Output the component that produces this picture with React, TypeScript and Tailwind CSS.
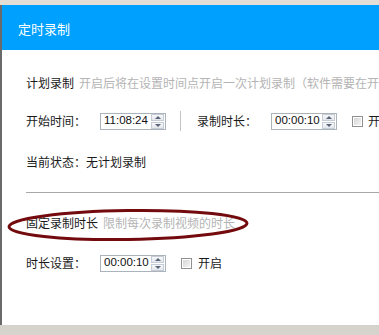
import React from "react";

const cjk = { fontFamily: '"Noto Sans CJK SC", "Liberation Sans", sans-serif' };
const num = { fontFamily: '"Liberation Sans", Arial, sans-serif' };

function Spin({ value }: { value: string }) {
  return (
    <div className="flex h-[17px] w-[66px] shrink-0 items-center border border-[#abb3bd] bg-white pl-[3px]">
      <span className="flex-1 text-[11.5px] leading-none text-[#111]" style={num}>
        {value}
      </span>
      <div className="mr-[1px] flex h-[15px] w-[13px] flex-col gap-[1px]">
        <div className="flex flex-1 items-center justify-center border border-[#c6ccd6] bg-gradient-to-b from-[#f7f8fa] to-[#e3e6ec]">
          <svg width="6" height="3" viewBox="0 0 6 3">
            <path d="M0 3L3 0L6 3Z" fill="#5a6478" />
          </svg>
        </div>
        <div className="flex flex-1 items-center justify-center border border-[#c6ccd6] bg-gradient-to-b from-[#f7f8fa] to-[#e3e6ec]">
          <svg width="6" height="3" viewBox="0 0 6 3">
            <path d="M0 0L3 3L6 0Z" fill="#5a6478" />
          </svg>
        </div>
      </div>
    </div>
  );
}

function Check() {
  return (
    <div className="h-[11px] w-[11px] shrink-0 border border-[#8e9092] bg-white p-[1px]">
      <div className="h-full w-full bg-gradient-to-br from-[#d6d6d6] to-[#f4f4f4]" />
    </div>
  );
}

export default function App() {
  return (
    <div className="relative h-[335px] w-[379px] overflow-hidden bg-gradient-to-b from-[#9c9c94] to-[#d6d4cc]" style={cjk}>
      <div className="h-[5px] bg-[#e4ded6]" />
      <div className="flex h-[320px] flex-col border-l-2 border-[#6a6a6a] bg-white">
        <div className="flex h-[45px] shrink-0 items-center bg-[#00a0ff] pl-[16px] pt-[3px] text-[13px] text-white">
          定时录制
        </div>

        <div className="flex flex-col pl-[24px] text-[12px] text-[#1a1a1a]">
          <div className="mt-[23px] flex h-[20px] items-center overflow-hidden whitespace-nowrap">
            <span className="shrink-0">计划录制</span>
            <span className="ml-[5px] shrink-0 text-[#b4b4b4]">开启后将在设置时间点开启一次计划录制（软件需要在开启状态）</span>
          </div>

          <div className="mt-[18px] flex h-[20px] items-center overflow-hidden whitespace-nowrap">
            <span className="w-[74px] shrink-0">开始时间：</span>
            <Spin value="11:08:24" />
            <div className="ml-[14px] h-[24px] w-px shrink-0 bg-[#c4c4c4]" />
            <span className="ml-[16px] w-[74px] shrink-0">录制时长：</span>
            <Spin value="00:00:10" />
            <div className="ml-[15px] shrink-0">
              <Check />
            </div>
            <span className="ml-[5px] shrink-0">开启</span>
          </div>

          <div className="mt-[21px] flex h-[20px] items-center whitespace-nowrap">当前状态：无计划录制</div>

          <div className="mt-[20px] h-px bg-[#a8a8a8]" />

          <div className="mt-[20px] flex h-[20px] items-center whitespace-nowrap">
            <span>固定录制时长</span>
            <span className="ml-[5px] text-[#b4b4b4]">限制每次录制视频的时长</span>
          </div>

          <div className="mt-[20px] flex h-[20px] items-center whitespace-nowrap">
            <span className="w-[74px] shrink-0">时长设置：</span>
            <Spin value="00:00:10" />
            <div className="ml-[15px]">
              <Check />
            </div>
            <span className="ml-[6px]">开启</span>
          </div>
        </div>
      </div>

      <svg className="pointer-events-none absolute left-0 top-0" width="379" height="335" viewBox="0 0 379 335">
        <ellipse cx="128" cy="225" rx="119" ry="14.5" fill="none" stroke="#730a0d" strokeWidth="3" transform="rotate(-0.8 128 225)" />
      </svg>
    </div>
  );
}
